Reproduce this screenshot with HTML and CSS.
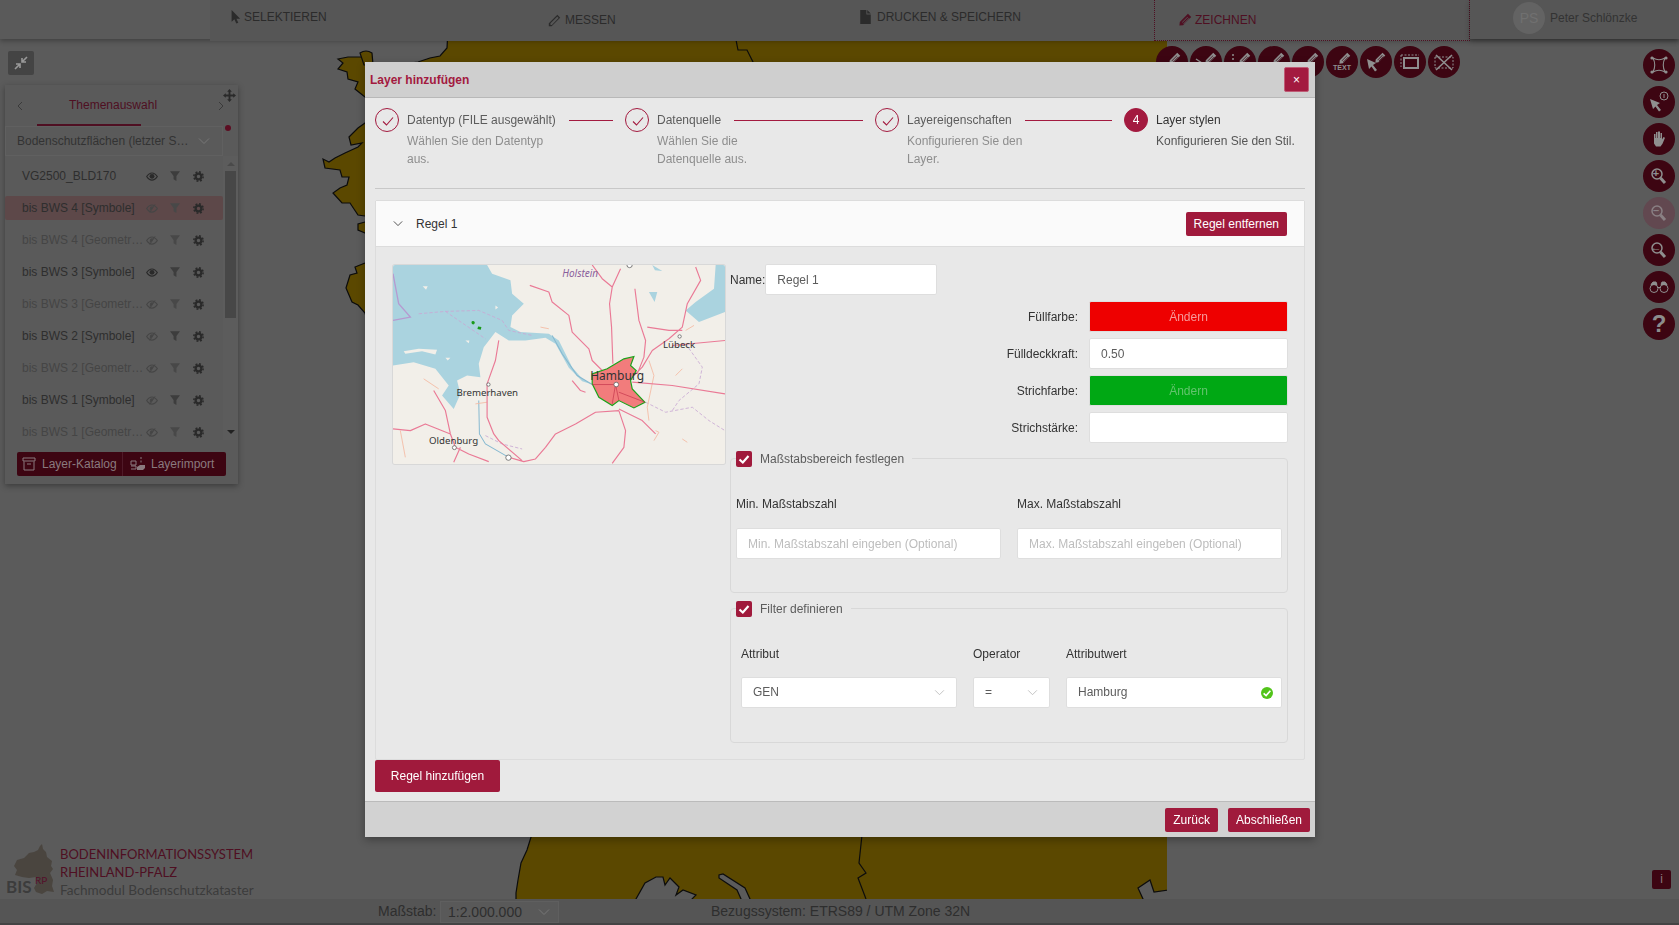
FILE: index.html
```html
<!DOCTYPE html>
<html>
<head>
<meta charset="utf-8">
<title>Bodeninformationssystem</title>
<link rel="stylesheet" href="styles.css">
</head>
<body>

<svg class="defs" width="0" height="0">
  <symbol id="i-cursor" viewBox="0 0 12 18"><path d="M1 0v15l3.600-3.200L7 17.500l2.600-1.200-2.400-5.200H12z"/></symbol>
  <symbol id="i-ruler" viewBox="0 0 16 16"><path d="M11.500 1 15 4.500 4.500 15H1v-3.500zM11.500 3 3 11.500V13.500h1.800L13 5z"/></symbol>
  <symbol id="i-file" viewBox="0 0 12 16"><path d="M0 0h7v5h5v11H0zM8 0l4 4H8z"/></symbol>
  <symbol id="i-pen" viewBox="0 0 16 16"><path fill-rule="evenodd" d="M11 1l4 4L5 15l-4.500.5L1 11zM10.500 4.500 3.500 11.500l.6.6 7-7zM12.200 6.200l-7 7 .6.6 7-7z"/></symbol>
  <symbol id="i-eye" viewBox="0 0 16 12"><path fill-rule="evenodd" d="M0 6C2.500 2 5.200 .5 8 .5S13.500 2 16 6c-2.500 4-5.200 5.500-8 5.500S2.500 10 0 6zM1.800 6C3.800 8.800 5.800 10 8 10s4.200-1.200 6.200-4C12.200 3.200 10.200 2 8 2S3.800 3.200 1.800 6z"/><circle cx="8" cy="5.800" r="3.300"/></symbol>
  <symbol id="i-eyeoff" viewBox="0 0 16 12"><path fill-rule="evenodd" d="M0 6C2.500 2 5.200 .5 8 .5S13.500 2 16 6c-2.500 4-5.200 5.500-8 5.500S2.500 10 0 6zM1.800 6C3.800 8.800 5.800 10 8 10s4.200-1.200 6.200-4C12.200 3.200 10.200 2 8 2S3.800 3.200 1.800 6z"/><path d="M5 6a3 3 0 0 1 5-2.200L6 9A3 3 0 0 1 5 6z"/><path d="M12 .5 5 11.500" stroke="currentColor" stroke-width="1.300" fill="none"/></symbol>
  <symbol id="i-filter" viewBox="0 0 14 14"><path d="M0 .5h14L9 7v7L5 11.500V7z"/></symbol>
  <symbol id="i-gear" viewBox="0 0 14 14"><circle cx="7" cy="7" r="3.600" fill="none" stroke="currentColor" stroke-width="2.800"/><circle cx="7" cy="7" r="5.900" fill="none" stroke="currentColor" stroke-width="2" stroke-dasharray="2.400 2.230"/></symbol>
  <symbol id="i-chevron" viewBox="0 0 12 8"><path d="M1 1.500 6 6.500l5-5" fill="none" stroke="currentColor" stroke-width="1"/></symbol>
  <symbol id="i-check" viewBox="0 0 16 16"><path d="M3.500 8.500 6.800 11.500 12.500 5" fill="none" stroke="currentColor" stroke-width="2.200"/></symbol>
  <symbol id="i-thin" viewBox="0 0 24 24"><path d="M7 12.500 10.500 16 17 8.500" fill="none" stroke="currentColor" stroke-width="1.100"/></symbol>
  <symbol id="i-zoom" viewBox="0 0 18 18"><circle cx="7" cy="7" r="5" fill="none" stroke="currentColor" stroke-width="1.500"/><path d="M10.500 11 15 16" stroke="currentColor" stroke-width="3"/></symbol>
</svg>

<nav class="topbar">
  <div class="tab tab_select"><svg class="tab_icon sel"><use href="#i-cursor"/></svg>SELEKTIEREN</div>
  <div class="tab tab_measure"><svg class="tab_icon"><use href="#i-ruler"/></svg>MESSEN</div>
  <div class="tab tab_print"><svg class="tab_icon sel"><use href="#i-file"/></svg>DRUCKEN &amp; SPEICHERN</div>
  <div class="tab tab_draw"><svg class="tab_icon"><use href="#i-pen"/></svg>ZEICHNEN</div>
  <div class="profile"><span class="avatar">PS</span>Peter Schlönzke</div>
</nav>

<main class="map">
  <svg class="map_canvas" viewBox="0 40 1679 859" width="1679" height="859">
    <path class="land" d="M448 30 447 48 440 56 430 58 418 62 385 66 366 66 365 57 348 57 338 59 343 63 338 69 347 72 348 79 358 82 355 89 365 97 385 110 365 123 358 128 349 137 351 145 362 143 358 147 345 153 335 158 329 162 323 159 325 168 340 170 342 177 349 177 347 185 340 188 333 193 342 203 350 203 358 215 365 216 385 219 365 222 358 224 358 230 365 233 385 250 365 263 355 267 357 273 350 275 346 288 352 302 358 305 365 313 420 500 540 830 531 837 527 850 521 863 518 880 516 893 516 915 636 915 636 899 645 883 656 877 663 877 665 885 670 878 679 887 676 895 683 890 696 895 692 899 692 915 741 915 741 899 737 890 719 878 719 875 723 874 745 888 750 899 750 915 1143 915 1143 899 1138 888 1150 880 1154 892 1168 890 1168 30Z"/>
    <path class="land" d="M360 53q6-4 12 0l1 12h-9z"/>
    <path class="state" d="M736 40 738 50 747 50 751 58 755 66M862 835 859 863 866 873 858 878 866 899"/>
    <rect class="map_edge" x="1167" y="30" width="512" height="880"/>
  </svg>

  <button class="mini_btn"><svg viewBox="0 0 14 14" width="14" height="14"><path d="M13 1 8.500 5.500M8 2v4h4M1 13l4.500-4.500M2 8h4v4" fill="none" stroke="currentColor" stroke-width="1.600"/></svg></button>

  <section class="layers">
    <svg class="move" viewBox="0 0 14 14" width="13" height="13"><path d="M7 0 9.500 3H8v3h3V4.500L14 7l-3 2.500V8H8v3h1.500L7 14l-2.500-3H6V8H3v1.500L0 7l3-2.500V6h3V3H4.500z"/></svg>
    <span class="dot"></span>
    <div class="layers_tabs">
      <svg class="arrow"><path d="M5 1 1 5l4 4" fill="none" stroke="currentColor"/></svg>
      <div class="layers_tab">Themenauswahl</div>
      <svg class="arrow"><path d="M1 1l4 4-4 4" fill="none" stroke="currentColor"/></svg>
    </div>
    <div class="theme_select">
      <span>Bodenschutzflächen (letzter S…</span>
      <svg class="chev"><use href="#i-chevron"/></svg>
    </div>
    <div class="layers_body">
      <ul class="layer_list">
        <li class="layer"><span class="layer_name">VG2500_BLD170</span><svg class="ic_eye"><use href="#i-eye"/></svg><svg class="ic_filter"><use href="#i-filter"/></svg><svg class="ic_gear"><use href="#i-gear"/></svg></li>
        <li class="layer active"><span class="layer_name">bis BWS 4 [Symbole]</span><svg class="ic_eye off"><use href="#i-eyeoff"/></svg><svg class="ic_filter off"><use href="#i-filter"/></svg><svg class="ic_gear"><use href="#i-gear"/></svg></li>
        <li class="layer muted"><span class="layer_name">bis BWS 4 [Geometr…</span><svg class="ic_eye off"><use href="#i-eyeoff"/></svg><svg class="ic_filter off"><use href="#i-filter"/></svg><svg class="ic_gear"><use href="#i-gear"/></svg></li>
        <li class="layer"><span class="layer_name">bis BWS 3 [Symbole]</span><svg class="ic_eye"><use href="#i-eye"/></svg><svg class="ic_filter"><use href="#i-filter"/></svg><svg class="ic_gear"><use href="#i-gear"/></svg></li>
        <li class="layer muted"><span class="layer_name">bis BWS 3 [Geometr…</span><svg class="ic_eye off"><use href="#i-eyeoff"/></svg><svg class="ic_filter off"><use href="#i-filter"/></svg><svg class="ic_gear"><use href="#i-gear"/></svg></li>
        <li class="layer"><span class="layer_name">bis BWS 2 [Symbole]</span><svg class="ic_eye off"><use href="#i-eyeoff"/></svg><svg class="ic_filter"><use href="#i-filter"/></svg><svg class="ic_gear"><use href="#i-gear"/></svg></li>
        <li class="layer muted"><span class="layer_name">bis BWS 2 [Geometr…</span><svg class="ic_eye off"><use href="#i-eyeoff"/></svg><svg class="ic_filter off"><use href="#i-filter"/></svg><svg class="ic_gear"><use href="#i-gear"/></svg></li>
        <li class="layer"><span class="layer_name">bis BWS 1 [Symbole]</span><svg class="ic_eye off"><use href="#i-eyeoff"/></svg><svg class="ic_filter"><use href="#i-filter"/></svg><svg class="ic_gear"><use href="#i-gear"/></svg></li>
        <li class="layer muted"><span class="layer_name">bis BWS 1 [Geometr…</span><svg class="ic_eye off"><use href="#i-eyeoff"/></svg><svg class="ic_filter off"><use href="#i-filter"/></svg><svg class="ic_gear"><use href="#i-gear"/></svg></li>
      </ul>
      <div class="scrollbar">
        <span class="scroll_up"></span>
        <span class="scroll_thumb"></span>
        <span class="scroll_down"></span>
      </div>
    </div>
    <div class="layer_btns">
      <button class="layer_btn first"><svg viewBox="0 0 14 14" width="14" height="14"><path d="M1 1h12v3H1zM2 4.500v8.500h10V4.500M5 7h4" fill="none" stroke="currentColor"/></svg>Layer-Katalog</button>
      <button class="layer_btn"><svg viewBox="0 0 16 14" width="16" height="14"><path d="M1 4h5v4H1zM1 9h5v3H1M11 0v2M11 3.500v2" fill="none" stroke="currentColor"/><path d="M7 10l3-2h5v3l-2 2H7z"/></svg>Layerimport</button>
    </div>
  </section>

  <div class="draw_tools">
    <span class="round"><svg class="tool_svg" viewBox="0 0 32 32"><use href="#i-pen" x="13" y="6" width="12" height="12"/></svg></span>
    <span class="round"><svg class="tool_svg" viewBox="0 0 32 32"><use href="#i-pen" x="15" y="6" width="12" height="12"/><path d="M6 13l6 4-2 2" fill="none" stroke="currentColor" stroke-width="1.500"/></svg></span>
    <span class="round"><svg class="tool_svg" viewBox="0 0 32 32"><use href="#i-pen" x="15" y="6" width="12" height="12"/><path d="M9 8v12" fill="none" stroke="currentColor" stroke-width="1.500" stroke-dasharray="2 2"/></svg></span>
    <span class="round"><svg class="tool_svg" viewBox="0 0 32 32"><use href="#i-pen" x="15" y="6" width="12" height="12"/></svg></span>
    <span class="round"><svg class="tool_svg" viewBox="0 0 32 32"><use href="#i-pen" x="15" y="6" width="12" height="12"/></svg></span>
    <span class="round text_tool"><svg class="ri_small"><use href="#i-pen"/></svg>TEXT</span>
    <span class="round"><svg viewBox="0 0 24 24" width="24" height="24"><path d="M3 9 12 13 9 15 13 20 11 21.500 7.500 16.500 5 19z"/><use href="#i-pen" x="11" y="2" width="11" height="11"/></svg></span>
    <span class="round"><svg viewBox="0 0 24 24" width="24" height="24"><path d="M6 8h14v10H6z" fill="none" stroke="currentColor" stroke-width="2"/><path d="M3 5h18M3 5v12" fill="none" stroke="currentColor" stroke-dasharray="2 1.500"/></svg></span>
    <span class="round"><svg viewBox="0 0 24 24" width="24" height="24"><path d="M3 7h18v11H3z" fill="none" stroke="currentColor" stroke-dasharray="2 1.500"/><path d="M4 5 20 20M20 5 4 20" stroke="currentColor" stroke-width="1.600"/></svg></span>
  </div>

  <div class="map_tools">
    <span class="round"><svg viewBox="0 0 24 24" width="24" height="24"><path d="M6 5q6 3.500 12 0q-3.500 7 0 14q-6-3.500-12 0q3.500-7 0-14z" fill="none" stroke="currentColor" stroke-width="1.100"/><circle cx="5" cy="5" r="1.600"/><circle cx="19" cy="5" r="1.600"/><circle cx="5" cy="19" r="1.600"/><circle cx="19" cy="19" r="1.600"/></svg></span>
    <span class="round"><svg viewBox="0 0 24 24" width="24" height="24"><path d="M3 9 13 13 10 15 14 20 12 21.500 8.500 16.500 6 19z"/><circle cx="17" cy="6" r="4" fill="none" stroke="currentColor"/><path d="M17 4v4" stroke="currentColor"/></svg></span>
    <span class="round"><svg viewBox="0 0 24 24" width="24" height="24"><path d="M7 12V7h1.500v4h.5V5h1.500v6h.5V4.500H13V11h.5V6H15v6.500l1.500-2.500 1.500.8-2.500 6-2 2.700H9l-2-3z"/></svg></span>
    <span class="round"><svg class="ri"><use href="#i-zoom"/></svg><i class="zoom_mark">+</i></span>
    <span class="round disabled"><svg class="ri"><use href="#i-zoom"/></svg><i class="zoom_mark">–</i></span>
    <span class="round"><svg class="ri"><use href="#i-zoom"/></svg><i class="zoom_mark">←</i></span>
    <span class="round"><svg viewBox="0 0 24 24" width="24" height="24"><circle cx="7" cy="13.500" r="4" fill="none" stroke="currentColor" stroke-width="1"/><circle cx="17" cy="13.500" r="4" fill="none" stroke="currentColor" stroke-width="1"/><path d="M4 9.500 6 7h3l1 2.500zM14 9.500 15 7h3l2 2.500zM10.500 12.500h3" stroke="currentColor"/></svg></span>
    <span class="round help">?</span>
  </div>

  <div class="logo">
    <svg class="logo_mark" viewBox="0 843 56 54" width="56" height="54">
      <path class="logo_land" d="M42 844 43 849 46 852 47 857 52 861 51 866 53 869 50 873 53 880 52 886 54 892 47 891 42 894 36 892 34 888 37 883 36 877 29 878 22 877 15 875 17 870 14 866 17 860 24 858 29 853 34 852 38 850 40 846z"/>
      <text class="logo_bis" x="6" y="893">BIS</text>
      <text class="logo_rp" x="35" y="884">RP</text>
    </svg>
    <div class="logo_text">
      <div class="logo_line">BODENINFORMATIONSSYSTEM</div>
      <div class="logo_line">RHEINLAND-PFALZ</div>
      <div class="logo_line sub">Fachmodul Bodenschutzkataster</div>
    </div>
  </div>

  <span class="info_btn">i</span>
</main>

<footer class="statusbar">
  <label class="scale_label">Maßstab:</label>
  <div class="scale_select"><span>1:2.000.000</span><svg class="chev"><use href="#i-chevron"/></svg></div>
  <div class="crs">Bezugssystem: ETRS89 / UTM Zone 32N</div>
</footer>

<div class="modal_wrap">
  <div class="modal">
    <header class="modal_head">
      <h1 class="modal_title">Layer hinzufügen</h1>
      <button class="modal_close">×</button>
    </header>

    <div class="modal_body">
      <div class="steps">
        <div class="step">
          <span class="step_icon"><svg width="24" height="24"><use href="#i-thin"/></svg></span>
          <div class="step_text">
            <div class="step_title">Datentyp (FILE ausgewählt)</div>
            <div class="step_desc">Wählen Sie den Datentyp aus.</div>
          </div>
        </div>
        <div class="step">
          <span class="step_icon"><svg width="24" height="24"><use href="#i-thin"/></svg></span>
          <div class="step_text">
            <div class="step_title">Datenquelle</div>
            <div class="step_desc">Wählen Sie die Datenquelle aus.</div>
          </div>
        </div>
        <div class="step step_third">
          <span class="step_icon"><svg width="24" height="24"><use href="#i-thin"/></svg></span>
          <div class="step_text">
            <div class="step_title">Layereigenschaften</div>
            <div class="step_desc">Konfigurieren Sie den Layer.</div>
          </div>
        </div>
        <div class="step current">
          <span class="step_icon">4</span>
          <div class="step_text">
            <div class="step_title">Layer stylen</div>
            <div class="step_desc">Konfigurieren Sie den Stil.</div>
          </div>
        </div>
      </div>

      <div class="rule">
        <div class="rule_head">
          <svg class="rule_chev"><use href="#i-chevron"/></svg>
          <span class="rule_name">Regel 1</span>
          <button class="btn btn_small">Regel entfernen</button>
        </div>
        <div class="rule_body">
          <svg class="preview" viewBox="23 14 995 596" width="332" height="199" preserveAspectRatio="none">
            <rect x="23" y="14" width="995" height="596" fill="#f2efe9"/>
            <path class="water" d="M23 14H305L320 40 375 60 380 100 415 130 380 165 375 200 405 215 490 220 520 240 560 320 590 355 620 372 590 362 550 322 510 250 480 232 420 240 370 240 330 215 295 260 280 310 285 350 245 345 215 360 225 400 205 445 170 405 190 375 150 325 85 305 23 315Z"/>
            <path class="water" d="M990 14H1018V155L940 185 900 150 930 125 985 85ZM800 14l30 18-22-2zM790 95h25l-8 30z"/>
            <path class="island" d="M55 272 100 265 155 268 150 282 110 272 60 280ZM112 78h15l-5 10zM240 240h12l-2 8ZM180 292h15l-8 8zM330 135l8 6-8 6z"/>
            <path class="boundary" d="M100 160 180 153 280 150 350 180 370 210 440 225M180 153 300 235M780 425 840 455 920 440 970 480 1018 510M900 250 950 320 940 370 880 420 860 450M300 525 350 550 410 565"/>
            <path class="admin" d="M23 180 75 170 40 130 23 40"/>
            <path class="river" d="M280 420 282 520 300 550 370 590M500 225 530 280 575 345 620 372"/>
            <path class="minor" d="M115 355 160 385M270 430 305 425M790 300 805 345 785 440 790 480M870 345 890 325M810 510 820 515 805 540M45 510 60 590M890 535 905 545M465 200 490 205M900 210 925 195"/>
            <path class="road" d="M433 75 490 95 500 125 550 165 560 215 610 265 620 300 665 345M620 14 650 55 680 80 672 130 678 200 682 310M705 25 680 80M748 85 760 180 780 240 775 290 755 340M930 20 945 60 905 130 890 200 850 235 800 270 770 320 745 345M785 200 850 210 890 210M860 255 1018 240M740 365 860 375 1018 400M700 450 630 455 570 490 510 520 480 560 450 595 415 603 370 590M700 450 720 510 715 560 680 608M700 445 770 480 810 520M340 240 330 300 305 370 305 470 325 520 340 540 410 600M23 505 75 510 120 490 195 520 210 560 250 580 310 603M145 390 180 450 195 520M205 605 225 560M560 360 585 390 600 395"/>
            <path class="hamburg" d="M620 340 665 325 690 310 715 295 745 288 735 315 752 330 735 360 740 385 778 425 745 442 700 420 680 435 640 410 620 370Z"/>
            <path class="road thin" d="M620 372 690 372 700 420M690 372 680 430M700 395 778 425"/>
            <path class="hamburg_dots" d="M262 182a5 5 0 1 0 6 6 5 5 0 0 0-6-6zM278 198l10 2-2 8-10-2z"/>
            <circle class="town" cx="692" cy="372" r="7"/>
            <circle class="town big" cx="369" cy="591" r="8"/>
            <circle class="town" cx="309" cy="372" r="5"/>
            <circle class="town" cx="882" cy="228" r="5"/>
            <circle class="town" cx="207" cy="561" r="6"/>
            <circle class="town big" cx="732" cy="14" r="8"/>
            <text class="label state_label" x="530" y="49">Holstein</text>
            <text class="label" x="213" y="405">Bremerhaven</text>
            <text class="label large" x="614" y="359">Hamburg</text>
            <text class="label" x="832" y="262">Lübeck</text>
            <text class="label" x="131" y="549">Oldenburg</text>
          </svg>

          <div class="style_form">
            <div class="name_row">
              <label class="field_label">Name:</label>
              <input class="input name_input" type="text" value="Regel 1">
            </div>
            <div class="form_row">
              <label class="field_label">Füllfarbe:</label>
              <button class="color_btn fill">Ändern</button>
            </div>
            <div class="form_row">
              <label class="field_label">Fülldeckkraft:</label>
              <input class="input row_input" type="text" value="0.50">
            </div>
            <div class="form_row">
              <label class="field_label">Strichfarbe:</label>
              <button class="color_btn stroke">Ändern</button>
            </div>
            <div class="form_row">
              <label class="field_label">Strichstärke:</label>
              <input class="input row_input" type="text">
            </div>

            <fieldset class="group scale_group">
              <legend class="group_legend"><span class="checkbox"><svg width="16" height="16"><use href="#i-check"/></svg></span>Maßstabsbereich festlegen</legend>
              <div class="scale_grid">
                <div>
                  <div class="group_label">Min. Maßstabszahl</div>
                  <input class="input" type="text" placeholder="Min. Maßstabszahl eingeben (Optional)">
                </div>
                <div>
                  <div class="group_label">Max. Maßstabszahl</div>
                  <input class="input" type="text" placeholder="Max. Maßstabszahl eingeben (Optional)">
                </div>
              </div>
            </fieldset>

            <fieldset class="group filter_group">
              <legend class="group_legend"><span class="checkbox"><svg width="16" height="16"><use href="#i-check"/></svg></span>Filter definieren</legend>
              <div class="filter_grid">
                <div>
                  <div class="group_label">Attribut</div>
                  <div class="input select"><span>GEN</span><svg class="chev"><use href="#i-chevron"/></svg></div>
                </div>
                <div>
                  <div class="group_label">Operator</div>
                  <div class="input select"><span>=</span><svg class="chev"><use href="#i-chevron"/></svg></div>
                </div>
                <div>
                  <div class="group_label">Attributwert</div>
                  <div class="input select"><span>Hamburg</span><span class="valid"><svg width="12" height="12" viewBox="0 0 16 16"><use href="#i-check"/></svg></span></div>
                </div>
              </div>
            </fieldset>
          </div>
        </div>
      </div>

      <button class="btn btn_add">Regel hinzufügen</button>
    </div>

    <footer class="modal_foot">
      <button class="btn btn_small">Zurück</button>
      <button class="btn btn_small">Abschließen</button>
    </footer>
  </div>
</div>

</body>
</html>
```

FILE: styles.css
```css
* {
  box-sizing: border-box;
}
body {
  margin: 0;
  width: 1679px;
  height: 925px;
  overflow: hidden;
  display: flex;
  flex-direction: column;
  background: #5b5b5b;
  font-family: "Liberation Sans", Arial, sans-serif;
  font-size: 12px;
  color: #2e2e2e;
}
button {
  font-family: inherit;
  font-size: 12px;
  cursor: pointer;
}
svg {
  fill: currentColor;
}
.defs {
  position: absolute;
}

/* top navigation */
.topbar {
  position: relative;
  z-index: 3;
  flex: none;
  height: 40px;
  display: flex;
  padding-left: 210px;
  color: #2b2b2b;
}
.topbar::before {
  content: "";
  position: absolute;
  z-index: -1;
  left: 0;
  right: 0;
  top: 0;
  height: 39px;
  background: #5a5a5a;
  box-shadow: 0 2px 5px rgba(0, 0, 0, 0.3);
}
.tab {
  display: flex;
  align-items: center;
  gap: 4px;
  height: 41px;
  background: #565656;
}
.tab_icon {
  width: 13px;
  height: 13px;
}
.tab_icon.sel {
  width: 11px;
  height: 14px;
}
.tab_select {
  width: 315px;
  padding: 0 0 7px 20px;
  gap: 3px;
}
.tab_measure {
  width: 312px;
  padding: 0 0 1px 23px;
}
.tab_print {
  width: 317px;
  padding: 0 0 7px 23px;
  gap: 6px;
}
.tab_draw {
  width: 316px;
  padding: 0 0 1px 24px;
  gap: 3px;
  color: #4f0f22;
  border: 1px dotted #4f0f22;
  border-top: none;
}
.profile {
  flex: 1;
  display: flex;
  align-items: center;
  gap: 5px;
  height: 39px;
  padding: 0 0 3px 43px;
  background: #565656;
  box-shadow: 0 2px 5px rgba(0, 0, 0, 0.3);
  color: #333;
}
.avatar {
  width: 32px;
  height: 32px;
  border-radius: 50%;
  background: #636363;
  color: #707070;
  font-size: 14px;
  line-height: 32px;
  text-align: center;
}

/* map area */
.map {
  position: relative;
  flex: 1;
  overflow: hidden;
}
.map_canvas {
  position: absolute;
  left: 0;
  top: 0;
}
.land {
  fill: #5b4800;
  stroke: #0c0c0c;
  stroke-width: 1.2;
}
.state {
  fill: none;
  stroke: #0c0c0c;
  stroke-width: 1.2;
}
.map_edge {
  fill: #5b5b5b;
}
.mini_btn {
  position: absolute;
  left: 8px;
  top: 11px;
  width: 26px;
  height: 24px;
  padding: 5px 6px;
  border: none;
  border-radius: 2px;
  background: #444;
  color: #999;
}

/* layer window */
.layers {
  position: absolute;
  left: 5px;
  top: 45px;
  width: 233px;
  height: 399px;
  background: #5a5a5a;
  box-shadow: 0 2px 6px rgba(0, 0, 0, 0.35);
}
.move {
  position: absolute;
  left: 218px;
  top: 4px;
  color: #2a2a2a;
}
.dot {
  position: absolute;
  left: 220px;
  top: 40px;
  width: 6px;
  height: 6px;
  border-radius: 50%;
  background: #5c0d22;
}
.layers_tabs {
  height: 41px;
  display: flex;
  align-items: center;
  padding: 0 14px 0 12px;
  color: #3a3a3a;
}
.arrow {
  width: 6px;
  height: 10px;
  flex: none;
}
.layers_tab {
  width: 104px;
  height: 41px;
  margin: 0 auto 0 14px;
  padding-top: 13px;
  white-space: nowrap;
  color: #4f0f22;
  text-indent: 32px;
  border-bottom: 2px solid #4f0f22;
}
.theme_select {
  width: 218px;
  height: 30px;
  display: flex;
  align-items: center;
  justify-content: space-between;
  padding: 0 12px 0 11px;
  border: 1px solid #606060;
  color: #333;
}
.chev {
  width: 12px;
  height: 8px;
  flex: none;
  color: #777;
}
.layers_body {
  display: flex;
  height: 284px;
}
.layer_list {
  list-style: none;
  margin: 0;
  padding: 8px 0 0;
  width: 218px;
}
.layer {
  display: flex;
  align-items: center;
  height: 24px;
  margin-bottom: 8px;
  padding-left: 17px;
  border-radius: 2px;
  color: #2e2e2e;
}
.layer.active {
  background: #5d4849;
}
.layer.muted {
  color: #454545;
}
.layer_name {
  width: 124px;
  white-space: nowrap;
}
.ic_eye {
  width: 12px;
  height: 9px;
  margin-right: 12px;
  color: #2a2a2a;
}
.ic_eye.off {
  color: #464646;
}
.ic_filter {
  width: 10px;
  height: 10px;
  margin-right: 13px;
  color: #3d3d3d;
}
.ic_filter.off {
  color: #484848;
}
.ic_gear {
  width: 11px;
  height: 11px;
  color: #2a2a2a;
}
.scrollbar {
  position: relative;
  width: 15px;
  background: #5c5c5c;
}
.scroll_up,
.scroll_down {
  position: absolute;
  left: 4px;
  width: 0;
  height: 0;
  border-left: 4px solid transparent;
  border-right: 4px solid transparent;
}
.scroll_up {
  top: 6px;
  border-bottom: 4px solid #4a4a4a;
}
.scroll_down {
  bottom: 6px;
  border-top: 4px solid #222;
}
.scroll_thumb {
  position: absolute;
  left: 2px;
  top: 15px;
  width: 11px;
  height: 147px;
  background: #474747;
}
.layer_btns {
  display: flex;
  width: 209px;
  height: 24px;
  margin: 12px 0 0 12px;
  border-radius: 2px;
  background: #3d0512;
}
.layer_btn {
  display: flex;
  align-items: center;
  gap: 6px;
  height: 24px;
  padding: 0 0 0 5px;
  border: none;
  background: none;
  color: #8a7a7e;
}
.layer_btn.first {
  width: 106px;
  border-right: 1px solid #4f1a28;
}
.layer_btn:not(.first) {
  padding-left: 7px;
  gap: 5px;
}

/* round tool buttons */
.draw_tools {
  position: absolute;
  left: 1156px;
  top: 6px;
  display: flex;
  gap: 2px;
}
.map_tools {
  position: absolute;
  left: 1643px;
  top: 9px;
  display: flex;
  flex-direction: column;
  gap: 5px;
}
.round {
  position: relative;
  width: 32px;
  height: 32px;
  display: flex;
  flex-direction: column;
  align-items: center;
  justify-content: center;
  border-radius: 50%;
  background: #3d0512;
  color: #8f8f8f;
}
.tool_svg {
  width: 32px;
  height: 32px;
}
.ri {
  width: 18px;
  height: 18px;
}
.ri_small {
  width: 12px;
  height: 12px;
  margin-left: 5px;
}
.text_tool {
  font-size: 7px;
  font-weight: bold;
  line-height: 8px;
}
.round.disabled {
  background: #624850;
  color: #8a8084;
}
.zoom_mark {
  position: absolute;
  left: 7px;
  top: 7px;
  width: 12px;
  font-style: normal;
  font-size: 11px;
  font-weight: bold;
  line-height: 12px;
  text-align: center;
}
.help {
  font-size: 24px;
  font-weight: bold;
  color: #8c8c8c;
}

/* logo, bottom left */
.logo {
  position: absolute;
  left: 0;
  top: 803px;
  display: flex;
  gap: 4px;
  font-family: Lato, "Liberation Sans", sans-serif;
}
.logo_land {
  fill: #4a453f;
}
.logo_bis {
  font-size: 17px;
  font-weight: bold;
  fill: #3c3c3c;
}
.logo_rp {
  font-size: 10px;
  fill: #54102a;
}
.logo_text {
  padding-top: 2px;
}
.logo_line {
  height: 18px;
  font-size: 13px;
  line-height: 18px;
  white-space: nowrap;
  color: #4f0f22;
}
.logo_line.sub {
  font-size: 13.600px;
  color: #3c3c3c;
}
.info_btn {
  position: absolute;
  left: 1652px;
  top: 830px;
  width: 19px;
  height: 19px;
  border-radius: 2px;
  background: #3d0512;
  color: #8a7a7e;
  line-height: 19px;
  text-align: center;
}

/* status bar */
.statusbar {
  position: relative;
  z-index: 3;
  flex: none;
  height: 26px;
  display: flex;
  align-items: flex-start;
  padding: 2px 0 0 378px;
  background: #555;
  border-bottom: 2px solid #444;
  font-size: 14px;
  color: #2e2e2e;
}
.scale_label {
  width: 62px;
  line-height: 20px;
}
.scale_select {
  width: 119px;
  height: 22px;
  display: flex;
  align-items: center;
  justify-content: space-between;
  padding: 0 8px 0 7px;
  background: #595959;
  border: 1px solid #5f5f5f;
}
.crs {
  margin-left: 152px;
  line-height: 20px;
}

/* modal */
.modal_wrap {
  position: fixed;
  z-index: 10;
  left: 0;
  top: 0;
  right: 0;
  bottom: 0;
  display: flex;
  justify-content: center;
  padding: 62px 0 0 1px;
}
.modal {
  width: 950px;
  height: 775px;
  display: flex;
  flex-direction: column;
  background: #e8e8e8;
  box-shadow: 0 3px 8px rgba(0, 0, 0, 0.3);
}
.modal_head {
  flex: none;
  height: 36px;
  display: flex;
  align-items: center;
  justify-content: space-between;
  padding: 0 6px 0 5px;
  background: #cfcfcf;
  border-bottom: 1px solid #b8b8b8;
}
.modal_title {
  margin: 0;
  font-size: 12px;
  font-weight: bold;
  color: #a31a3f;
}
.modal_close {
  width: 25px;
  height: 25px;
  padding: 0;
  background: #a31a3f;
  border: 1px solid #bf5c76;
  border-radius: 2px;
  color: #fff;
  font-size: 12px;
}
.modal_body {
  flex: 1;
  padding: 10px 10px 0;
}
.modal_foot {
  flex: none;
  height: 36px;
  display: flex;
  justify-content: flex-end;
  gap: 10px;
  padding: 6px 5px 0 0;
  background: #d2d2d2;
  border-top: 1px solid #bbb;
}
.btn {
  border: none;
  border-radius: 2px;
  background: #a01a3c;
  color: #fff;
}
.btn_small {
  height: 24px;
  padding: 0 8px;
}
.btn_add {
  display: block;
  width: 125px;
  height: 32px;
}

/* steps */
.steps {
  display: flex;
  padding-bottom: 20px;
  border-bottom: 1px solid #c8c8c8;
}
.step {
  flex: 0 0 250px;
  display: flex;
  gap: 8px;
}
.step_third {
  flex: 0 0 249px;
}
.step.current {
  flex: 0 0 181px;
}
.step_icon {
  flex: none;
  width: 24px;
  height: 24px;
  border: 1px solid #a31a3f;
  border-radius: 50%;
  color: #a31a3f;
  line-height: 22px;
  text-align: center;
}
.step_text {
  flex: 1;
}
.step_title {
  display: flex;
  align-items: center;
  height: 24px;
  color: #5c5c5c;
  white-space: nowrap;
}
.step_title::after {
  content: "";
  flex: 1;
  height: 1px;
  margin: 1px 12px 0 13px;
  background: #a31a3f;
}
.step_desc {
  max-width: 140px;
  line-height: 18px;
  color: #8e8e8e;
}
.step.current .step_icon {
  background: #a31a3f;
  color: #fff;
}
.step.current .step_title {
  color: #333;
}
.step.current .step_title::after {
  display: none;
}
.step.current .step_desc {
  color: #555;
}

/* rule card */
.rule {
  margin-top: 11px;
  border: 1px solid #dcdcdc;
  border-radius: 2px;
}
.rule_head {
  height: 46px;
  display: flex;
  align-items: center;
  padding: 0 17px 0 17px;
  background: #fafafa;
  border-bottom: 1px solid #dcdcdc;
  color: #333;
}
.rule_chev {
  width: 10px;
  height: 7px;
  margin-right: 13px;
  color: #333;
}
.rule_name {
  flex: 1;
}
.rule_body {
  display: flex;
  align-items: flex-start;
  gap: 5px;
  padding: 17px 16px 16px 17px;
}
.preview {
  flex: none;
  margin-top: 1px;
  border-radius: 2px;
  box-shadow: 0 0 0 1px #d8d8d8;
}
.water {
  fill: #aad3df;
}
.island {
  fill: #f2efe9;
}
.boundary {
  fill: none;
  stroke: #c9a8d4;
  stroke-width: 2.500;
  stroke-dasharray: 10 6;
}
.admin {
  fill: none;
  stroke: #b69ad0;
  stroke-width: 4;
}
.river {
  fill: none;
  stroke: #85b8d0;
  stroke-width: 3;
}
.minor {
  fill: none;
  stroke: #f4b8a0;
  stroke-width: 2.500;
  stroke-linejoin: round;
}
.road {
  fill: none;
  stroke: #ea7a96;
  stroke-width: 3.500;
  stroke-linejoin: round;
}
.road.thin {
  stroke: #c2324a;
  stroke-width: 2;
}
.hamburg {
  fill: #f27c7c;
  stroke: #1aa31a;
  stroke-width: 3.500;
}
.hamburg_dots {
  fill: #1a9a1a;
}
.town {
  fill: #fff;
  stroke: #666;
  stroke-width: 2.500;
}
.label {
  font-family: "Noto Sans", sans-serif;
  font-size: 29px;
  fill: #333;
}
.label.large {
  font-size: 36px;
}
.state_label {
  font-size: 30px;
  font-style: italic;
  fill: #8a5f9c;
}

/* style form */
.style_form {
  flex: 1;
  min-width: 0;
}
.name_row {
  display: flex;
  align-items: center;
  height: 31px;
  margin-bottom: 6px;
}
.form_row {
  display: flex;
  align-items: center;
  justify-content: flex-end;
  gap: 11px;
  height: 31px;
  margin-bottom: 6px;
}
.field_label {
  color: #333;
}
.input {
  display: block;
  width: 100%;
  height: 31px;
  padding: 0 11px;
  background: #fff;
  border: 1px solid #dedede;
  border-radius: 2px;
  outline: none;
  font-family: inherit;
  font-size: 12px;
  color: #5c5c5c;
}
.input::placeholder {
  color: #bdbdbd;
}
.name_input {
  width: 172px;
}
.row_input {
  width: 199px;
}
.color_btn {
  width: 199px;
  height: 31px;
  border: 1px solid #dedede;
  border-radius: 2px;
}
.color_btn.fill {
  background: #ee0000;
  color: #f79a9a;
}
.color_btn.stroke {
  background: #00a814;
  color: #63c46e;
}
.group {
  min-width: 0;
  margin: 0;
  padding: 0 5px;
  border: 1px solid #d8d8d8;
  border-radius: 4px;
}
.scale_group {
  margin-top: 5px;
  height: 144px;
}
.filter_group {
  margin-top: 6px;
  height: 144px;
}
.group_legend {
  display: flex;
  align-items: center;
  gap: 8px;
  height: 18px;
  margin: 0;
  padding: 2px 8px 0 0;
  color: #5c5c5c;
}
.checkbox {
  width: 16px;
  height: 16px;
  border-radius: 2px;
  background: #a01a3c;
  color: #fff;
}
.checkbox svg {
  display: block;
}
.group_label {
  height: 18px;
  margin-bottom: 15px;
  line-height: 18px;
  color: #333;
}
.filter_group .group_label {
  margin-bottom: 14px;
}
.scale_grid {
  display: grid;
  grid-template-columns: 1fr 1fr;
  gap: 16px;
  padding-top: 28px;
}
.filter_grid {
  display: grid;
  grid-template-columns: 1fr 77px 1fr;
  gap: 16px;
  padding: 28px 0 0 5px;
}
.select {
  display: flex;
  align-items: center;
  justify-content: space-between;
  line-height: 29px;
}
.select .chev {
  width: 11px;
  height: 7px;
  color: #bbb;
}
.valid {
  width: 12px;
  height: 12px;
  margin-right: -3px;
  border-radius: 50%;
  background: #52c41a;
  color: #fff;
}
.valid svg {
  display: block;
}
```
